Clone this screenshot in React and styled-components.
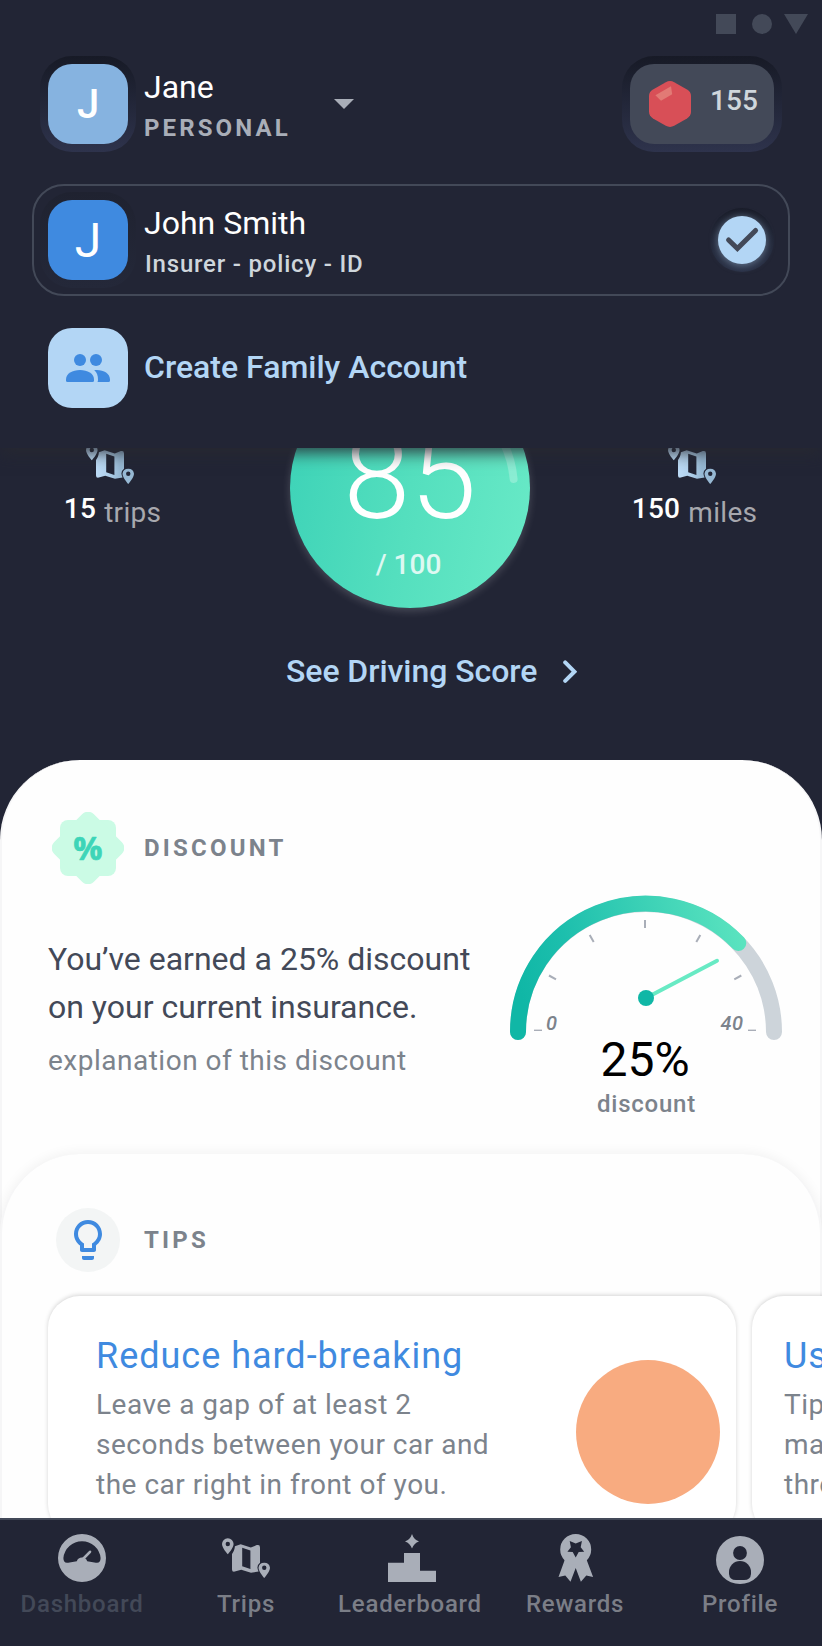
import React from 'react';
import styled, { createGlobalStyle } from 'styled-components';
import { MdArrowDropDown } from 'react-icons/md';

const c = {
  night: '#222535',
  slate: '#434958',
  mist: '#a9aeb8',
  grey: '#7c838c',
  silver: '#cfd6dc',
  sky: '#b3d6f5',
  blue: '#3f8ae0',
  teal: '#10b7a6',
};

const GlobalStyle = createGlobalStyle`
  *, *::before, *::after { box-sizing: border-box; }
  body { margin: 0; background: ${c.night}; font-family: Roboto, "Liberation Sans", sans-serif; }
  svg { display: block; flex: none; }
`;

const Screen = styled.div`
  position: relative;
  display: flex;
  flex-direction: column;
  width: 822px;
  height: 1646px;
  overflow: hidden;
  background: ${c.night};
`;

/* ---------- account menu ---------- */

const AccountPanel = styled.header`
  position: absolute;
  inset: 0 0 auto 0;
  z-index: 2;
  height: 448px;
  background: ${c.night};
  box-shadow: 0 4px 16px rgba(40, 41, 48, 0.95);
`;

const StatusBar = styled.div`
  display: flex;
  justify-content: flex-end;
  height: 64px;
  padding: 14px 14px 0 0;
`;

const HeaderRow = styled.div`
  display: flex;
  align-items: center;
  height: 80px;
  padding: 0 48px;
`;

const Caret = styled(MdArrowDropDown)`
  margin-top: -2px;
`;

const SelectedRow = styled.div`
  display: flex;
  align-items: center;
  height: 112px;
  margin: 40px 32px 0;
  padding: 0 22px 0 14px;
  border: 2px solid ${c.slate};
  border-radius: 32px;
`;

const CreateRow = styled.div`
  display: flex;
  gap: 16px;
  margin: 32px 48px 0;
  color: ${c.sky};
  font-size: 32px;
  font-weight: 500;
  line-height: 78px;
`;

const Ring = styled.div`
  flex: none;
  margin: -8px;
  padding: 8px;
  border-radius: ${(p) => p.$radius || '32px'};
  background: linear-gradient(${(p) => p.$from}, ${(p) => p.$to});
`;

const Tile = styled.div`
  display: flex;
  align-items: center;
  justify-content: center;
  width: 80px;
  height: 80px;
  padding-top: 2px;
  border-radius: 24px;
  background: ${(p) => p.$bg};
  color: #fff;
  font-size: ${(p) => p.$size || 40}px;
  font-weight: ${(p) => p.$weight || 500};
  line-height: 1;
`;

const IconTile = styled(Tile)`
  padding-top: 0;
`;

const NameBlock = styled.div`
  width: ${(p) => p.$width || 'auto'};
  height: 80px;
  margin-left: 16px;
  padding-top: 3px;
`;

const Name = styled.div`
  color: #fff;
  font-size: 32px;
  line-height: 40px;
`;

const AccountKind = styled.div`
  margin-top: 9px;
  color: ${c.mist};
  font-size: 24px;
  font-weight: 700;
  line-height: 24px;
  letter-spacing: 3.1px;
`;

const PolicyLine = styled.div`
  margin: 9px 0 0 1px;
  color: ${c.silver};
  font-size: 24px;
  font-weight: 500;
  line-height: 24px;
  letter-spacing: 0.8px;
`;

const Spacer = styled.div`
  flex: 1;
`;

const GemPill = styled.div`
  display: flex;
  align-items: flex-start;
  gap: 19px;
  width: 144px;
  height: 80px;
  padding: 17px 0 0 19px;
  border-radius: 24px;
  background: ${c.slate};
`;

const GemCount = styled.span`
  margin-top: 4px;
  color: ${c.silver};
  font-size: 28px;
  font-weight: 500;
  line-height: 32px;
  letter-spacing: 0.1px;
`;

const CheckDisc = styled.div`
  width: 48px;
  height: 48px;
  border-radius: 50%;
  background: ${c.sky};
  box-shadow: 0 1px 8px rgba(179, 214, 245, 0.5);
`;

/* ---------- score hero ---------- */

const Main = styled.main`
  flex: 1;
  min-height: 0;
  overflow: hidden;
`;

const Hero = styled.section`
  height: 760px;
  padding-top: 368px;
`;

const ScoreRow = styled.div`
  display: grid;
  grid-template-columns: 290px 240px 1fr;
  height: 240px;
`;

const Stat = styled.div`
  display: flex;
  flex-direction: column;
  align-items: center;
  justify-self: ${(p) => p.$side};
  width: ${(p) => p.$width}px;
  padding-top: 76px;

  svg { margin-right: 5px; }
`;

const StatText = styled.div`
  display: flex;
  gap: 8px;
  margin-top: 9px;
  font-size: 28px;
  line-height: 32px;
  letter-spacing: 0.3px;
`;

const StatValue = styled.span`
  color: #fff;
  font-weight: 500;
`;

const StatUnit = styled.span`
  padding-top: 4px;
  color: #a7a8ae;
`;

const ScoreDisc = styled.div`
  position: relative;
  display: flex;
  flex-direction: column;
  align-items: center;
  padding-top: 49px;
  border-radius: 50%;
  background: linear-gradient(100deg, #3cd2b7, #54dfbe 50%, #69eac7);
  box-shadow: 0 3px 9px rgba(255, 255, 255, 0.18);
  color: #fff;
`;

const ScoreArc = styled.svg`
  position: absolute;
  inset: 0;
`;

const Score = styled.div`
  font-size: 120px;
  font-weight: 300;
  line-height: 120px;
`;

const ScoreMax = styled.div`
  margin-top: 12px;
  padding-right: 3px;
  font-size: 28px;
  font-weight: 500;
  line-height: 32px;
  opacity: 0.8;
`;

const ScoreLink = styled.a`
  display: flex;
  align-items: center;
  gap: 26px;
  margin: 43px 0 0 286px;
  color: ${c.sky};
  font-size: 32px;
  font-weight: 500;
  line-height: 40px;
  letter-spacing: -0.06px;
`;

/* ---------- sheets ---------- */

const Sheet = styled.section`
  position: relative;
  height: ${(p) => p.$height}px;
  margin-top: ${(p) => p.$lift || 0}px;
  padding: ${(p) => p.$top}px 0 0 46px;
  border: 2px solid #f6f6f7;
  border-width: 0 2px;
  border-radius: 80px 80px 0 0;
  background: #fefefe;
  box-shadow: ${(p) => (p.$lift ? '0 -2px 12px rgba(0, 0, 0, 0.05)' : 'none')};
`;

const SheetHead = styled.div`
  display: flex;
  align-items: center;
  gap: 16px;
`;

const Slot = styled.div`
  display: flex;
  align-items: center;
  justify-content: center;
  width: 80px;
  height: 80px;
`;

const BulbDisc = styled.div`
  display: flex;
  align-items: center;
  justify-content: center;
  width: 64px;
  height: 64px;
  border-radius: 50%;
  background: #f3f5f5;
  color: ${c.blue};
`;

const Overline = styled.h2`
  margin: 0;
  color: ${c.grey};
  font-size: 24px;
  font-weight: 700;
  line-height: 32px;
  letter-spacing: 3.2px;
`;

const DiscountBody = styled.div`
  display: flex;
  align-items: flex-start;
`;

const DiscountCopy = styled.div`
  width: 454px;
  padding-top: 47px;
`;

const Lead = styled.p`
  width: 440px;
  margin: 0;
  color: ${c.slate};
  font-size: 32px;
  line-height: 48px;
`;

const Note = styled.p`
  margin: ${(p) => p.$top}px 0 0;
  color: ${c.grey};
  font-size: 28px;
  line-height: 40px;
  letter-spacing: 0.5px;
`;

const Gauge = styled.div`
  display: flex;
  flex-direction: column;
  align-items: center;
  width: 288px;
`;

const GaugeValue = styled.div`
  margin-top: -16px;
  padding-right: 2px;
  color: #000;
  font-size: 48px;
  line-height: 56px;
`;

const GaugeLabel = styled.div`
  margin-top: 4px;
  padding-left: 1px;
  color: ${c.grey};
  font-size: 24px;
  font-weight: 500;
  line-height: 24px;
  letter-spacing: 0.76px;
`;

const Cards = styled.div`
  display: flex;
  gap: 16px;
  margin-top: 16px;
  padding-bottom: 8px;
`;

const TipCard = styled.article`
  display: flex;
  flex: none;
  justify-content: space-between;
  width: 688px;
  height: 240px;
  padding: 36px 16px 0 ${(p) => p.$inset}px;
  border-radius: 32px;
  background: #fff;
  box-shadow: 0 -1px 4px rgba(0, 0, 0, 0.17);
`;

const TipCopy = styled.div`
  width: 400px;
`;

const TipTitle = styled.h3`
  margin: 0;
  color: ${c.blue};
  font-size: 36px;
  font-weight: 400;
  line-height: 48px;
  letter-spacing: 0.98px;
  white-space: nowrap;
`;

const TipPicture = styled.div`
  width: 144px;
  height: 144px;
  margin-top: 28px;
  border-radius: 50%;
  background: #f8ab80;
`;

/* ---------- bottom navigation ---------- */

const Nav = styled.nav`
  position: relative;
  z-index: 1;
  display: grid;
  grid-template-columns: 164px 164px 164px 166px 164px;
  height: 128px;
  border-top: 2px solid ${c.slate};
  background: ${c.night};
`;

const NavItem = styled.a`
  display: flex;
  flex-direction: column;
  align-items: center;
  gap: 10px;
  padding-top: 14px;
  color: ${c.mist};
`;

const NavLabel = styled.span`
  color: ${(p) => (p.$active ? c.slate : '#7b7e87')};
  font-size: 24px;
  font-weight: 500;
  line-height: 24px;
  letter-spacing: 0.76px;
`;

/* ---------- drawings ---------- */

const StatusGlyphs = () => (
  <svg width="92" height="20" fill={c.slate}>
    <rect width="20" height="20" />
    <circle cx="46" cy="10" r="10" />
    <path d="M68 0H92L80 20Z" />
  </svg>
);

const GemIcon = () => (
  <svg width="42" height="46" viewBox="0 0 42 46">
    <path d="M16.8 1.2Q21 -1.1 25.2 1.2L38 8.6Q42 11 42 15.2V30.8Q42 35 38 37.4L25.2 44.8Q21 47.1 16.8 44.8L4 37.4Q0 35 0 30.8V15.2Q0 11 4 8.6Z" fill="#d84f57" />
    <path d="M6.4 14.2L22 5.2L23.2 13.2L12 19.8Z" fill="#e27a75" />
  </svg>
);

const CheckIcon = () => (
  <svg width="48" height="48" fill="none" stroke={c.slate} strokeWidth="5" strokeLinecap="round">
    <path d="M10.6 24L19.4 32.6L37.6 14.4" />
  </svg>
);

const PeopleIcon = () => (
  <svg width="48" height="48" fill={c.blue}>
    <circle cx="16" cy="16" r="6" />
    <circle cx="32" cy="16" r="6" />
    <path d="M2 35.5C2 29.5 8.5 26 16 26S30 29.5 30 35.500V36.5Q30 38 28.5 38H3.5Q2 38 2 36.5Z" />
    <path d="M30.2 26.2C38.5 25.2 46 29 46 35.5V36.5Q46 38 44.5 38H33.5Q34 37 34 35.5C34 31.5 33 28.5 30.2 26.2Z" />
  </svg>
);

const TripsIcon = ({ gradient, size = 48 }) => (
  <svg width="48" height={size} viewBox={size === 48 ? '0 -4 48 48' : '0 0 48 40'} fill={gradient ? `url(#${gradient})` : 'currentColor'}>
    {gradient && (
      <linearGradient id={gradient} gradientUnits="userSpaceOnUse" x1="10" y1="0" x2="38" y2="0">
        <stop offset="0" stopColor="#bddcf7" />
        <stop offset="0.4" stopColor="#b3d3ee" />
        <stop offset="0.85" stopColor="#97b9d4" />
      </linearGradient>
    )}
    <path fillRule="evenodd" d="M0 6A5.8 5.8 0 0 1 11.6 6C11.6 10 5.8 16.3 5.8 16.3S0 10 0 6ZM5.8 3.8A2.2 2.2 0 1 0 5.8 8.2A2.2 2.2 0 1 0 5.8 3.8Z" />
    <path fillRule="evenodd" d="M36.5 29.8A5.8 5.8 0 0 1 48 29.8C48 33.8 42.25 40 42.25 40S36.5 33.8 36.5 29.8ZM42.25 27.6A2.2 2.2 0 1 0 42.25 32A2.2 2.2 0 1 0 42.25 27.6Z" />
    <path fillRule="evenodd" d="M10 16C11.2 14 12.8 11.5 12.9 8.2L18.7 6.2L28.8 9.4L34.8 7.1Q38 6.2 38 9.4V24.8Q35.6 26.5 35.4 29.6Q35.6 31.6 36.6 33.4L29 34.8L19.2 31.7L12.8 33.6Q10 34.2 10 31.4ZM20.2 9.8V28.2L28.4 31V12.5Z" />
  </svg>
);

const ChevronIcon = () => (
  <svg width="14" height="24" fill="none" stroke={c.sky} strokeWidth="4" strokeLinecap="round">
    <path d="M2.2 3.4L11.4 12.7L2.2 21.8" />
  </svg>
);

const DiscountBadge = () => (
  <svg width="72" height="72">
    <g fill="#cbfbe5">
      <rect x="8" y="8" width="56" height="56" rx="8" />
      <rect x="8" y="8" width="56" height="56" rx="8" transform="rotate(45 36 36)" />
    </g>
    <text x="36" y="47.6" textAnchor="middle" fill="#3dd5b8" fontFamily="'Open Sans', sans-serif" fontSize="32.5" fontWeight="700" stroke="#3dd5b8" strokeWidth="0.6" strokeLinejoin="round">%</text>
  </svg>
);

const BulbIcon = () => (
  <svg width="48" height="48" viewBox="0 0 24 24" fill="currentColor">
    <path d="M9 21c0 .5.4 1 1 1h4c.6 0 1-.5 1-1v-1H9v1zm3-19C8.1 2 5 5.1 5 9c0 2.4 1.2 4.5 3 5.7V17c0 .5.4 1 1 1h6c.6 0 1-.5 1-1v-2.3c1.8-1.3 3-3.4 3-5.7 0-3.9-3.1-7-7-7zm2.9 11.1l-.9.6V16h-4v-2.3l-.9-.6C7.8 12.2 7 10.6 7 9c0-2.8 2.2-5 5-5s5 2.2 5 5c0 1.6-.8 3.2-2.1 4.1z" />
  </svg>
);

const GaugeDial = () => (
  <svg width="288" height="160" fill="none">
    <linearGradient id="dial" gradientUnits="userSpaceOnUse" x1="20" y1="110" x2="240" y2="50">
      <stop offset="0" stopColor={c.teal} />
      <stop offset="0.25" stopColor="#1dbfad" />
      <stop offset="1" stopColor="#5ae3bf" />
    </linearGradient>
    <g strokeWidth="16" strokeLinecap="round">
      <path d="M16 144A128 128 0 0 1 272 144" stroke="#cdd4da" />
      <path d="M16 144A128 128 0 0 1 236.3 55" stroke="url(#dial)" />
    </g>
    <g stroke={c.mist} strokeWidth="2">
      <path d="M143 32V40" />
      <path d="M87.7 47L91.7 54" />
      <path d="M198.3 47L194.3 54" />
      <path d="M47 87.5L54 91.3" />
      <path d="M239.3 87.5L232.3 91.3" />
      <path d="M32 142.3H40" strokeWidth="1.4" />
      <path d="M246 142.3H254" strokeWidth="1.4" />
    </g>
    <path d="M144 110L215 72.8" stroke="#68eac4" strokeWidth="4" strokeLinecap="round" />
    <circle cx="144" cy="110" r="8" fill={c.teal} />
    <g fill={c.grey} fontSize="20" fontWeight="500" fontStyle="italic">
      <text x="44" y="142">0</text>
      <text x="218.5" y="142" letterSpacing="0.5">40</text>
    </g>
  </svg>
);

const DashboardIcon = () => (
  <svg width="48" height="48">
    <path fill="currentColor" fillRule="evenodd" d="M24 0A24 24 0 1 1 24 48A24 24 0 1 1 24 0ZM5.4 24A18.7 18.7 0 0 1 42.6 24Q42.6 29.6 37.8 28.7L29.2 27.2A5.5 5.5 0 0 0 18.8 27.2L10.2 28.7Q5.4 29.6 5.4 24Z" />
    <path d="M24.5 25.5L32 17.8" stroke="currentColor" strokeWidth="2.6" strokeLinecap="round" />
  </svg>
);

const LeaderboardIcon = () => (
  <svg width="48" height="48" fill="currentColor" overflow="visible">
    <path d="M2 28.7H18V19H34V36.7H50V48H2Z" />
    <path d="M26 0Q27.800 5.7 33 7.4Q27.8 9.1 26 14.6Q24.2 9.1 19 7.4Q24.2 5.7 26 0Z" />
  </svg>
);

const RewardsIcon = () => (
  <svg width="48" height="48" fill="currentColor" overflow="visible">
    <g transform="translate(0.7 0)">
      <path d="M13 26L6.8 43L13.6 41.6L18.8 47.7L24 34L29.2 47.7L34.6 41.6L41.4 43L35 26Z" />
      <path fillRule="evenodd" d="M24 0A15.5 15.5 0 1 1 24 31A15.5 15.5 0 1 1 24 0ZM18 7L19.2 13.3L15.7 17.7L21 18.1L24 23.5L27 18.1L32.5 17.7L29 13.3L30.2 7L24 9.5Z" />
    </g>
  </svg>
);

const ProfileIcon = () => (
  <svg width="48" height="48" overflow="visible">
    <circle cx="24" cy="26" r="24" fill="currentColor" />
    <circle cx="24" cy="19" r="6.9" fill={c.night} />
    <path d="M13 38A11 11 0 0 1 35 38V40Q34.5 46 28 46H20Q13.5 46 13 40Z" fill={c.night} />
  </svg>
);

const navItems = [
  { label: 'Dashboard', Icon: DashboardIcon, active: true },
  { label: 'Trips', Icon: TripsIcon },
  { label: 'Leaderboard', Icon: LeaderboardIcon },
  { label: 'Rewards', Icon: RewardsIcon },
  { label: 'Profile', Icon: ProfileIcon },
];

export default function App() {
  return (
    <Screen>
      <GlobalStyle />

      <AccountPanel>
        <StatusBar>
          <StatusGlyphs />
        </StatusBar>
        <HeaderRow>
          <Ring $from="#171a26" $to="#2e334c">
            <Tile $bg="#86b3e0">J</Tile>
          </Ring>
          <NameBlock $width="176px">
            <Name>Jane</Name>
            <AccountKind>PERSONAL</AccountKind>
          </NameBlock>
          <Caret size={48} color={c.mist} />
          <Spacer />
          <Ring $from="#171a26" $to="#2e334c">
            <GemPill>
              <GemIcon />
              <GemCount>155</GemCount>
            </GemPill>
          </Ring>
        </HeaderRow>
        <SelectedRow>
          <Ring $from="#1f2230" $to="#242839">
            <Tile $bg={c.blue} $size={48} $weight={400}>J</Tile>
          </Ring>
          <NameBlock>
            <Name>John Smith</Name>
            <PolicyLine>Insurer - policy - ID</PolicyLine>
          </NameBlock>
          <Spacer />
          <Ring $radius="50%" $from="#191c29" $to="#293045">
            <CheckDisc>
              <CheckIcon />
            </CheckDisc>
          </Ring>
        </SelectedRow>
        <CreateRow>
          <IconTile $bg={c.sky}>
            <PeopleIcon />
          </IconTile>
          Create Family Account
        </CreateRow>
      </AccountPanel>

      <Main>
        <Hero>
          <ScoreRow>
            <Stat $side="start" $width={225}>
              <TripsIcon gradient="tripsFill" size={40} />
              <StatText>
                <StatValue>15</StatValue>
                <StatUnit>trips</StatUnit>
              </StatText>
            </Stat>
            <ScoreDisc>
              <ScoreArc width="240" height="240" fill="none">
                <path d="M120 16A104 104 0 0 1 223.6 111" stroke="#fff" strokeOpacity="0.25" strokeWidth="8" strokeLinecap="round" />
              </ScoreArc>
              <Score>85</Score>
              <ScoreMax>/ 100</ScoreMax>
            </ScoreDisc>
            <Stat $side="end" $width={255}>
              <TripsIcon gradient="milesFill" size={40} />
              <StatText>
                <StatValue>150</StatValue>
                <StatUnit>miles</StatUnit>
              </StatText>
            </Stat>
          </ScoreRow>
          <ScoreLink>
            See Driving Score
            <ChevronIcon />
          </ScoreLink>
        </Hero>

        <Sheet $height={474} $top={48}>
          <SheetHead>
            <Slot>
              <DiscountBadge />
            </Slot>
            <Overline>DISCOUNT</Overline>
          </SheetHead>
          <DiscountBody>
            <DiscountCopy>
              <Lead>You’ve earned a 25% discount on your current insurance.</Lead>
              <Note $top={10}>explanation of this discount</Note>
            </DiscountCopy>
            <Gauge>
              <GaugeDial />
              <GaugeValue>25%</GaugeValue>
              <GaugeLabel>discount</GaugeLabel>
            </Gauge>
          </DiscountBody>
        </Sheet>

        <Sheet $height={400} $lift={-80} $top={46}>
          <SheetHead>
            <Slot>
              <BulbDisc>
                <BulbIcon />
              </BulbDisc>
            </Slot>
            <Overline>TIPS</Overline>
          </SheetHead>
          <Cards>
            <TipCard $inset={48}>
              <TipCopy>
                <TipTitle>Reduce hard-breaking</TipTitle>
                <Note $top={5}>Leave a gap of at least 2 seconds between your car and the car right in front of you.</Note>
              </TipCopy>
              <TipPicture />
            </TipCard>
            <TipCard $inset={32}>
              <TipCopy>
                <TipTitle>Use</TipTitle>
                <Note $top={5}>
                  Tip
                  <br />
                  map
                  <br />
                  through
                </Note>
              </TipCopy>
            </TipCard>
          </Cards>
        </Sheet>
      </Main>

      <Nav>
        {navItems.map(({ label, Icon, active }) => (
          <NavItem key={label}>
            <Icon />
            <NavLabel $active={active}>{label}</NavLabel>
          </NavItem>
        ))}
      </Nav>
    </Screen>
  );
}
